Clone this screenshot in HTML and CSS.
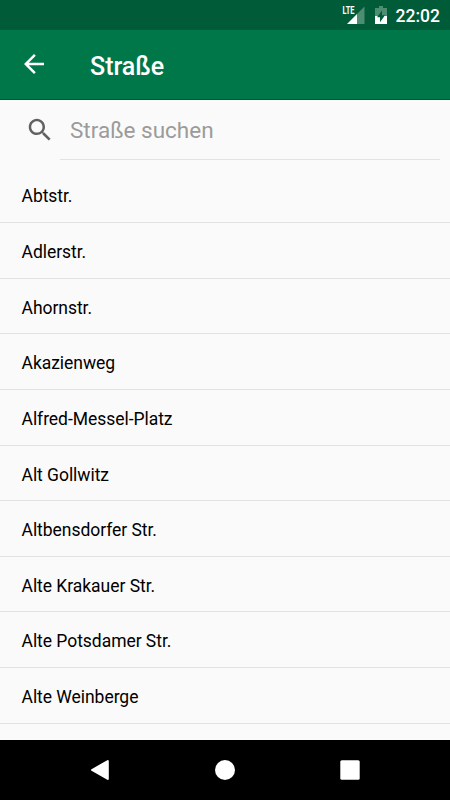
FILE: index.html
```html
<!DOCTYPE html>
<html lang="de">
<head>
  <meta charset="utf-8">
  <title>Straße</title>
  <link rel="stylesheet" href="styles.css">
</head>
<body>
  <div class="statusbar">
    <svg class="signal" width="24" height="24" viewBox="0 -2 24 24">
      <path d="M15 9v10H5z" fill="#fff"/>
      <path d="M15 9v10h7.500V1.500z" fill="#4d8d72"/>
      <text class="lte" x="0.500" y="9.300" textLength="12" lengthAdjust="spacingAndGlyphs">LTE</text>
    </svg>
    <svg class="battery" width="12" height="18" viewBox="0 0 12 18">
      <path d="M4 0h4v2h4v8H0V2h4z" fill="#4d8d72"/>
      <path d="M0 10h12v8H0z" fill="#fff"/>
      <path d="M7 4.500v4.800h3l-5 7v-5H2z" fill="#005b39"/>
    </svg>
    <span class="clock">22:02</span>
  </div>
  <div class="toolbar">
    <svg class="back" width="30" height="30" viewBox="0 0 24 24">
      <path d="M20 11H7.830l5.590-5.590L12 4l-8 8 8 8 1.410-1.410L7.830 13H20z" fill="#fff"/>
    </svg>
    <h1>Straße</h1>
  </div>
  <div class="search">
    <svg width="30" height="30" viewBox="0 0 24 24">
      <path d="M15.500 14h-.790l-.280-.270C15.410 12.590 16 11.110 16 9.500 16 5.910 13.090 3 9.500 3S3 5.910 3 9.500 5.910 16 9.500 16c1.610 0 3.090-.590 4.230-1.570l.270.280v.790l5 4.990L20.490 19zm-6 0C7.010 14 5 11.990 5 9.500S7.010 5 9.500 5 14 7.010 14 9.500 11.990 14 9.500 14z" fill="#616161"/>
    </svg>
    <input type="text" placeholder="Straße suchen">
  </div>
  <ul class="streets">
    <li>Abtstr.</li>
    <li>Adlerstr.</li>
    <li>Ahornstr.</li>
    <li>Akazienweg</li>
    <li>Alfred-Messel-Platz</li>
    <li>Alt Gollwitz</li>
    <li>Altbensdorfer Str.</li>
    <li>Alte Krakauer Str.</li>
    <li>Alte Potsdamer Str.</li>
    <li>Alte Weinberge</li>
  </ul>
  <div class="navbar">
    <svg width="20" height="22" viewBox="0 0 20 22">
      <path d="M17.800 2v18L2 11z" fill="#fff" stroke="#fff" stroke-width="2" stroke-linejoin="round"/>
    </svg>
    <svg width="20" height="20" viewBox="0 0 20 20">
      <circle cx="10" cy="10" r="10" fill="#fff"/>
    </svg>
    <svg width="20" height="20" viewBox="0 0 20 20">
      <rect x="0.300" y="0.300" width="19.400" height="19.400" rx="1.500" fill="#fff"/>
    </svg>
  </div>
</body>
</html>
```

FILE: styles.css
```css
body {
  margin: 0;
  height: 800px;
  display: flex;
  flex-direction: column;
  overflow: hidden;
  font-family: Roboto, sans-serif;
  background-color: #fafafa;
}

.statusbar {
  flex: none;
  box-sizing: border-box;
  height: 30px;
  padding: 0 10px 0 0;
  display: flex;
  justify-content: flex-end;
  align-items: center;
  background-color: #005b39;
  color: white;
}

.signal {
  margin-right: 9px;
  overflow: visible;
}

.lte {
  font-size: 11px;
  font-weight: bold;
  fill: white;
}

.battery {
  margin-right: 9px;
}

.clock {
  font-size: 17.5px;
  font-weight: 500;
  line-height: 30px;
  padding-top: 2px;
}

.toolbar {
  flex: none;
  box-sizing: border-box;
  height: 70px;
  padding: 0 20px 1px 19px;
  display: flex;
  align-items: center;
  background-color: #007749;
  border-bottom: 1px solid #006312;
}

.toolbar h1 {
  margin: 4px 0 0 41px;
  color: white;
  font-size: 25px;
  font-weight: 500;
}

.search {
  flex: none;
  height: 60px;
  padding: 0 10px 0 25px;
  display: flex;
  align-items: center;
}

.search input {
  flex-grow: 1;
  box-sizing: border-box;
  height: 60px;
  margin-left: 5px;
  padding: 0 10px 0;
  border: none;
  border-bottom: 1px solid #e2e2e2;
  outline: none;
  background: none;
  font-family: inherit;
  font-size: 22.5px;
}

.search input::placeholder {
  color: #9b9b9b;
}

.streets {
  flex: 1;
  min-height: 0;
  margin: 0;
  padding: 7.3px 0 0;
  overflow: hidden;
  list-style-type: none;
}

.streets li {
  box-sizing: border-box;
  height: 55.65px;
  padding-left: 21.5px;
  border-bottom: 1px solid #e2e2e2;
  color: black;
  font-size: 17.5px;
  letter-spacing: -0.04px;
  line-height: 58.4px;
}

.navbar {
  flex: none;
  height: 60px;
  padding: 0 90px;
  display: flex;
  justify-content: space-between;
  align-items: center;
  background-color: black;
}
```
